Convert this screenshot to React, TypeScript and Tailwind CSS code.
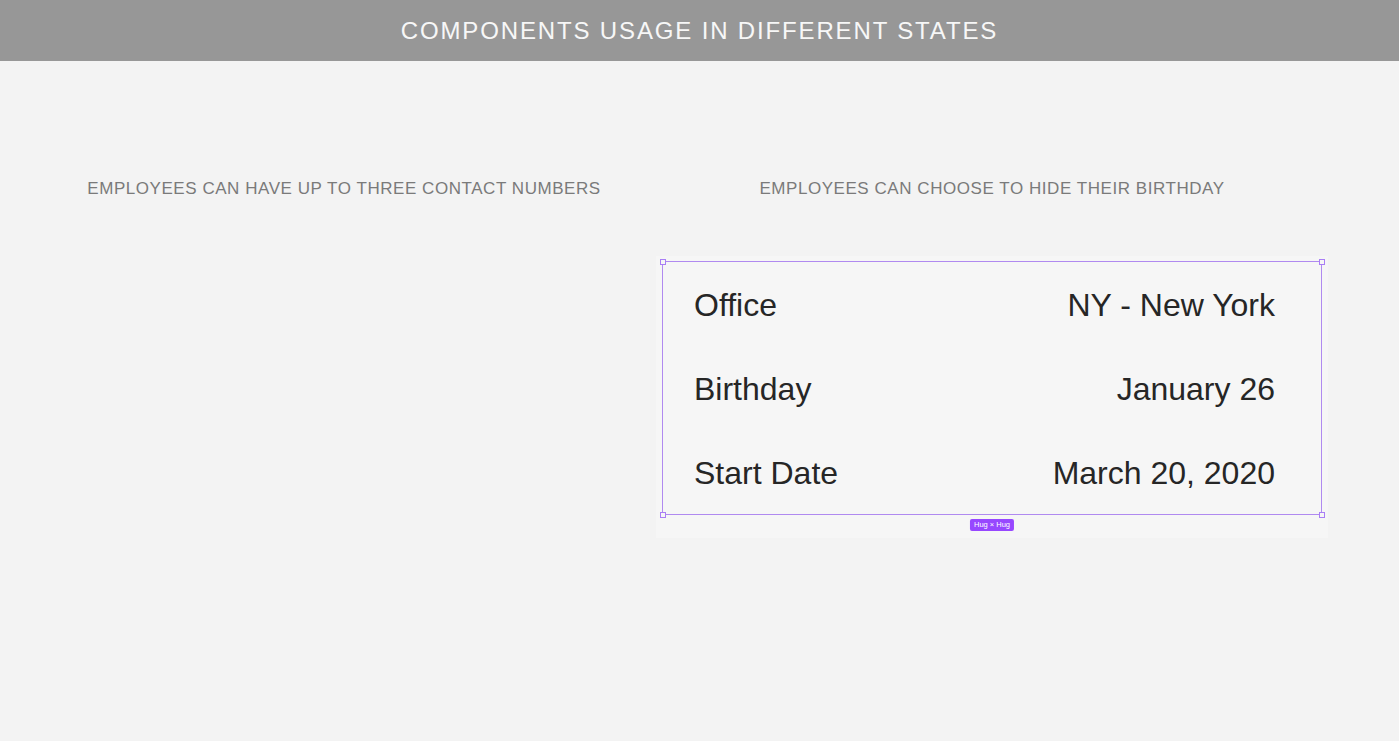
import React from "react";

const rows = [
  { label: "Office", value: "NY - New York" },
  { label: "Birthday", value: "January 26" },
  { label: "Start Date", value: "March 20, 2020" },
];

function Handle({ className }: { className: string }) {
  return <div className={`absolute h-[6px] w-[6px] border border-[#a97ef5] bg-[#f6f6f6] ${className}`} />;
}

export default function App() {
  return (
    <div className="min-h-screen bg-[#f3f3f3] font-['Liberation_Sans',Arial,sans-serif]">
      {/* Header bar */}
      <div className="flex h-[61px] items-center justify-center bg-[#979797]">
        <h1 className="text-[24px] tracking-[1.85px] text-[#f7f7f7]">COMPONENTS USAGE IN DIFFERENT STATES</h1>
      </div>

      <div className="flex gap-2 pt-[117px]">
        {/* Left column */}
        <div className="ml-[40px] flex w-[608px] flex-col items-center">
          <p className="text-[17px] leading-[22px] tracking-[0.55px] text-[#7a7a7a]">
            EMPLOYEES CAN HAVE UP TO THREE CONTACT NUMBERS
          </p>
        </div>

        {/* Right column */}
        <div className="flex w-[672px] flex-col items-center">
          <p className="text-[17px] leading-[22px] tracking-[0.55px] text-[#7a7a7a]">
            EMPLOYEES CAN CHOOSE TO HIDE THEIR BIRTHDAY
          </p>
          <div className="mt-[56px] w-full bg-[#f6f6f6] px-[6px] pt-[5px] pb-[23px]">
            <div className="relative border border-[#b08af0]">
              <Handle className="-left-[3.5px] -top-[3.5px]" />
              <Handle className="-right-[3.5px] -top-[3.5px]" />
              <Handle className="-left-[3.5px] -bottom-[3.5px]" />
              <Handle className="-right-[3.5px] -bottom-[3.5px]" />
              {rows.map((r) => (
                <div key={r.label} className="flex h-[84px] items-center justify-between pl-[31px] pr-[46px] pt-[2px] text-[32px] leading-[32px] text-[#262626]">
                  <span>{r.label}</span>
                  <span>{r.value}</span>
                </div>
              ))}
              <div className="absolute left-1/2 top-full mt-[5px] -translate-x-1/2 rounded-[2px] bg-[#9747ff] px-[4px] text-[7.5px] leading-[12px] whitespace-nowrap text-white">
                Hug × Hug
              </div>
            </div>
          </div>
        </div>
      </div>
    </div>
  );
}
